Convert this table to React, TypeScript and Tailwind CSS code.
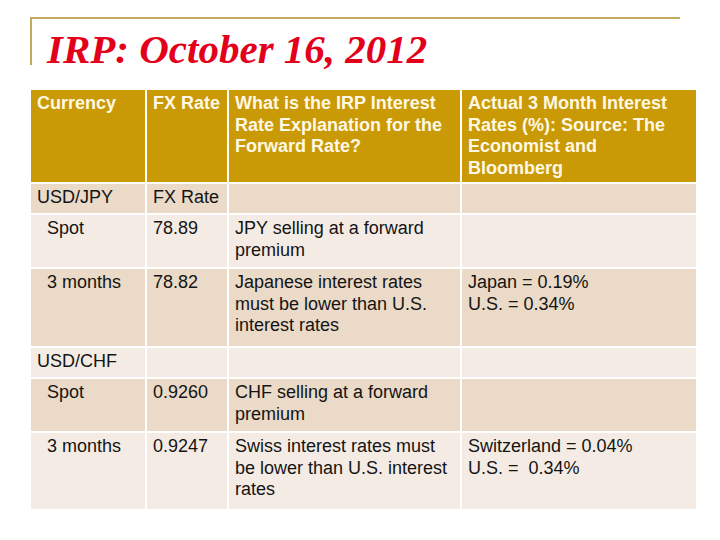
const HEAD = [
  "Currency",
  "FX Rate",
  "What is the IRP Interest Rate Explanation for the Forward Rate?",
  "Actual 3 Month Interest Rates (%): Source: The Economist and Bloomberg",
];

type Row = { cells: string[][]; dark: boolean; indent: boolean };

const ROWS: Row[] = [
  { cells: [["USD/JPY"], ["FX Rate"], [], []], dark: true, indent: false },
  { cells: [["Spot"], ["78.89"], ["JPY selling at a forward premium"], []], dark: false, indent: true },
  {
    cells: [["3 months"], ["78.82"], ["Japanese interest rates must be lower than U.S. interest rates"], ["Japan = 0.19%", "U.S. = 0.34%"]],
    dark: true,
    indent: true,
  },
  { cells: [["USD/CHF"], [], [], []], dark: false, indent: false },
  { cells: [["Spot"], ["0.9260"], ["CHF selling at a forward premium"], []], dark: true, indent: true },
  {
    cells: [["3 months"], ["0.9247"], ["Swiss interest rates must be lower than U.S. interest rates"], ["Switzerland = 0.04%", "U.S. =  0.34%"]],
    dark: false,
    indent: true,
  },
];

export default function App() {
  return (
    <div className="w-[720px] h-[540px] bg-white overflow-hidden font-['Liberation_Sans',Arial,sans-serif]">
      {/* title frame */}
      <div className="ml-[30px] mt-[17px] w-[650px] h-[48px] border-t-2 border-l-2 border-[#c2ab5e] pl-[15px]">
        <h1 className="mt-[10px] leading-none text-[41px] font-bold italic text-[#e3001b] font-['Liberation_Serif','Times_New_Roman',serif] whitespace-nowrap">
          IRP: October 16, 2012
        </h1>
      </div>

      <div className="ml-[31px] mt-[25px] grid grid-cols-[114px_80px_231px_234px] grid-rows-[92px_29px_52px_77px_29px_52px_76px] gap-[2px] text-[18px] leading-[21.5px]">
        {HEAD.map((h) => (
          <div
            key={h}
            className="bg-[#c99a06] px-[6px] pt-[3px] font-bold text-[#fff8e4]"
          >
            {h}
          </div>
        ))}
        {ROWS.map((row, r) =>
          row.cells.map((lines, c) => (
            <div
              key={`${r}-${c}`}
              className={`${row.dark ? "bg-[#eadac7]" : "bg-[#f4ece4]"} ${
                c === 0 && row.indent ? "pl-[16px]" : "pl-[6px]"
              } pr-[4px] pt-[3px] text-[#141414]`}
            >
              {lines.map((l) => (
                <div key={l} className="whitespace-pre-wrap">
                  {l}
                </div>
              ))}
            </div>
          ))
        )}
      </div>
    </div>
  );
}
